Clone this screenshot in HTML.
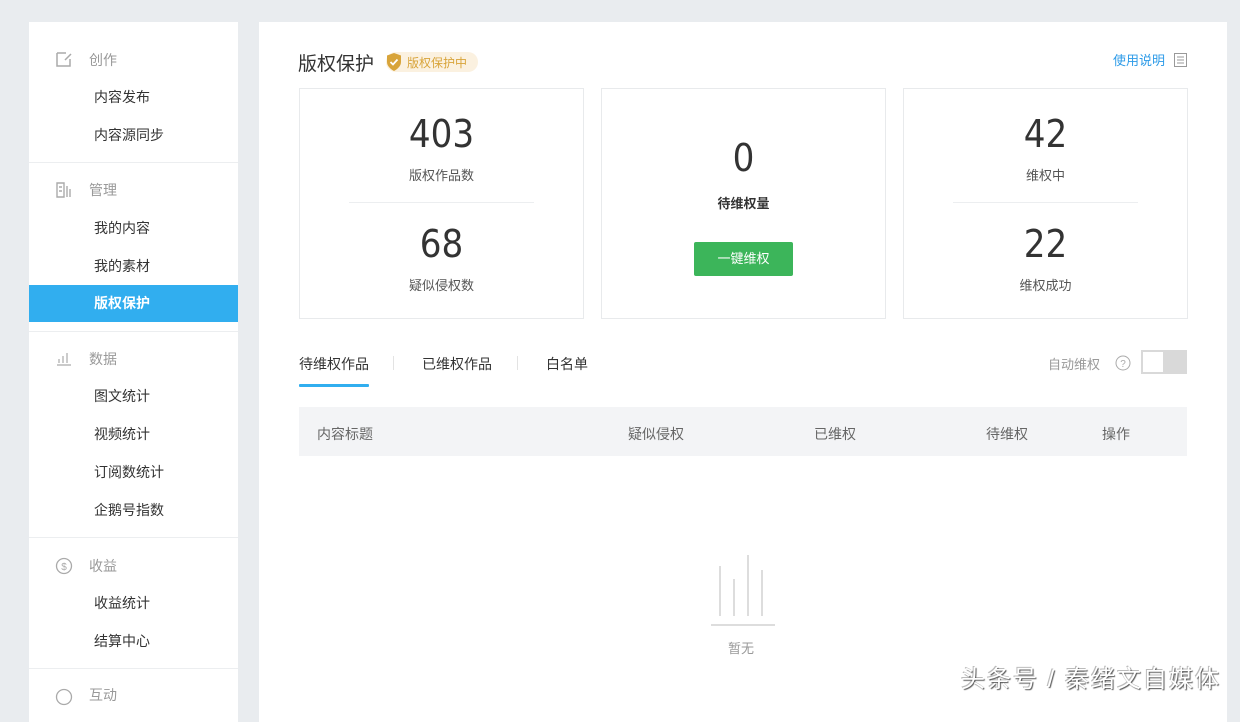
<!DOCTYPE html>
<html><head><meta charset="utf-8"><style>
*{margin:0;padding:0;box-sizing:border-box}
body{width:1240px;height:699px;background:#e9ecef;font-family:"Liberation Sans","Noto Sans CJK SC",sans-serif;position:relative;overflow:hidden;color:#333}
.abs{position:absolute}
.side{left:29px;top:22px;width:209px;height:700px;background:#fff}
.g{position:absolute;left:29px;font-size:14px;color:#999;line-height:20px}
.g span{position:absolute;left:31px;top:0;white-space:nowrap}
.it{position:absolute;left:65px;font-size:14px;color:#333;line-height:20px}
.dv{position:absolute;left:0;width:209px;height:1px;background:#eceef0}
.main{left:259px;top:22px;width:968px;height:700px;background:#fff}
.card{position:absolute;top:66px;width:285px;height:231px;border:1px solid #e8eaec;background:#fff}
.num{position:absolute;width:100%;text-align:center;font-size:38px;color:#333;font-family:"Liberation Sans Narrow","DejaVu Sans Condensed",sans-serif;line-height:40px}
.lb{position:absolute;width:100%;text-align:center;font-size:13px;color:#555;line-height:18px}
.th{position:absolute;top:17px;font-size:14px;color:#666}
</style></head><body>
<div class="abs side">
  <div class="g" style="top:28px"><svg width="16" height="16" viewBox="0 0 16 16" style="position:absolute;left:-2px;top:1px"><path d="M1 2h9M1 2v13h13V8M9 9l6-6" stroke="#aaa" fill="none" stroke-width="1.5"/></svg><span>创作</span></div>
  <div class="it" style="top:65px">内容发布</div>
  <div class="it" style="top:103px">内容源同步</div>
  <div class="dv" style="top:140px"></div>
  <div class="g" style="top:158px"><svg width="16" height="16" viewBox="0 0 16 16" style="position:absolute;left:-2px;top:2px"><path d="M1 1h7v14H1zM3 5h3M3 9h3M11 4v11M14 7v8" stroke="#aaa" fill="none" stroke-width="1.4"/></svg><span>管理</span></div>
  <div class="it" style="top:196px">我的内容</div>
  <div class="it" style="top:234px">我的素材</div>
  <div style="position:absolute;left:0;top:263px;width:209px;height:37px;background:#31aeef"></div>
  <div class="it" style="top:271px;color:#fff;font-weight:bold">版权保护</div>
  <div class="dv" style="top:309px"></div>
  <div class="g" style="top:327px"><svg width="16" height="16" viewBox="0 0 16 16" style="position:absolute;left:-2px;top:1px"><path d="M3 9v4M7 6v7M11 3v10M1 15h14" stroke="#aaa" fill="none" stroke-width="1.2"/></svg><span>数据</span></div>
  <div class="it" style="top:364px">图文统计</div>
  <div class="it" style="top:402px">视频统计</div>
  <div class="it" style="top:440px">订阅数统计</div>
  <div class="it" style="top:478px">企鹅号指数</div>
  <div class="dv" style="top:515px"></div>
  <div class="g" style="top:534px"><svg width="18" height="18" viewBox="0 0 18 18" style="position:absolute;left:-3px;top:1px"><circle cx="9" cy="9" r="7.5" stroke="#aaa" fill="none" stroke-width="1.3"/><text x="9" y="13" font-size="10" text-anchor="middle" fill="#aaa" font-family="Liberation Sans">$</text></svg><span>收益</span></div>
  <div class="it" style="top:571px">收益统计</div>
  <div class="it" style="top:609px">结算中心</div>
  <div class="dv" style="top:646px"></div>
  <div class="g" style="top:663px"><svg width="18" height="18" viewBox="0 0 18 18" style="position:absolute;left:-3px;top:3px"><circle cx="9" cy="9" r="7.5" stroke="#aaa" fill="none" stroke-width="1.3"/></svg><span>互动</span></div>
</div>
<div class="abs main">
  <div style="position:absolute;left:39px;top:27px;font-size:19px;color:#333">版权保护</div>
  <div style="position:absolute;left:127px;top:30px;width:92px;height:20px;border-radius:10px;background:#fbf1e0"></div>
  <svg width="18" height="20" viewBox="0 0 18 20" style="position:absolute;left:126px;top:30px"><path d="M9 1L16 3.5V10c0 4-3.5 7-7 9-3.5-2-7-5-7-9V3.5z" fill="#d8a43a"/><path d="M5.5 10l2.5 2.5 4.5-5" stroke="#fff" stroke-width="1.8" fill="none"/></svg>
  <div style="position:absolute;left:148px;top:32px;font-size:12px;color:#d8a43a">版权保护中</div>
  <div style="position:absolute;left:854px;top:28px;font-size:13px;color:#2d9be8">使用说明</div>
  <svg width="13" height="14" viewBox="0 0 13 14" style="position:absolute;left:915px;top:31px"><rect x="0.5" y="0.5" width="12" height="13" fill="none" stroke="#999"/><path d="M3 4h7M3 7h7M3 10h7" stroke="#999"/></svg>
  <div class="card" style="left:40px">
    <div class="num" style="top:25px">403</div><div class="lb" style="top:78px">版权作品数</div>
    <div style="position:absolute;left:49px;top:113px;width:185px;height:1px;background:#eceef0"></div>
    <div class="num" style="top:135px">68</div><div class="lb" style="top:188px">疑似侵权数</div>
  </div>
  <div class="card" style="left:342px">
    <div class="num" style="top:49px">0</div><div class="lb" style="top:106px;font-weight:bold;color:#333">待维权量</div>
    <div style="position:absolute;left:92px;top:153px;width:99px;height:34px;background:#3cb55a;border-radius:2px;color:#fff;font-size:13px;text-align:center;line-height:34px">一键维权</div>
  </div>
  <div class="card" style="left:644px">
    <div class="num" style="top:25px">42</div><div class="lb" style="top:78px">维权中</div>
    <div style="position:absolute;left:49px;top:113px;width:185px;height:1px;background:#eceef0"></div>
    <div class="num" style="top:135px">22</div><div class="lb" style="top:188px">维权成功</div>
  </div>
  <div style="position:absolute;left:40px;top:332px;font-size:14px;color:#333">待维权作品</div>
  <div style="position:absolute;left:40px;top:362px;width:70px;height:3px;background:#31aeef;border-radius:1px"></div>
  <div style="position:absolute;left:134px;top:334px;width:1px;height:14px;background:#e3e3e3"></div>
  <div style="position:absolute;left:163px;top:332px;font-size:14px;color:#333">已维权作品</div>
  <div style="position:absolute;left:258px;top:334px;width:1px;height:14px;background:#e3e3e3"></div>
  <div style="position:absolute;left:287px;top:332px;font-size:14px;color:#333">白名单</div>
  <div style="position:absolute;left:789px;top:332px;font-size:13px;color:#999">自动维权</div>
  <svg width="16" height="16" viewBox="0 0 16 16" style="position:absolute;left:856px;top:333px"><circle cx="8" cy="8" r="7" fill="none" stroke="#aaa"/><text x="8" y="12" font-size="10" text-anchor="middle" fill="#aaa" font-family="Liberation Sans">?</text></svg>
  <div style="position:absolute;left:882px;top:328px;width:46px;height:24px;background:#d9d9d9"></div>
  <div style="position:absolute;left:884px;top:330px;width:20px;height:20px;background:#fff"></div>
  <div style="position:absolute;left:40px;top:385px;width:888px;height:49px;background:#f3f4f6">
    <div class="th" style="left:18px">内容标题</div>
    <div class="th" style="left:329px">疑似侵权</div>
    <div class="th" style="left:515px">已维权</div>
    <div class="th" style="left:687px">待维权</div>
    <div class="th" style="left:803px">操作</div>
  </div>
  <svg width="70" height="80" viewBox="0 0 70 80" style="position:absolute;left:448px;top:530px"><path d="M13 14v50M27 27v37M41 3v61M55 18v46" stroke="#ddd" stroke-width="2"/><path d="M4 73h64" stroke="#ddd" stroke-width="2"/></svg>
  <div style="position:absolute;left:469px;top:616px;font-size:13px;color:#999">暂无</div>
</div>
<div style="position:absolute;left:961px;top:659px;font-size:24px;letter-spacing:2px;color:#fff;text-shadow:1px 1px 1px #555,-1px -1px 0 #bbb;white-space:nowrap">头条号 / 秦绪文自媒体</div>
</body></html>
